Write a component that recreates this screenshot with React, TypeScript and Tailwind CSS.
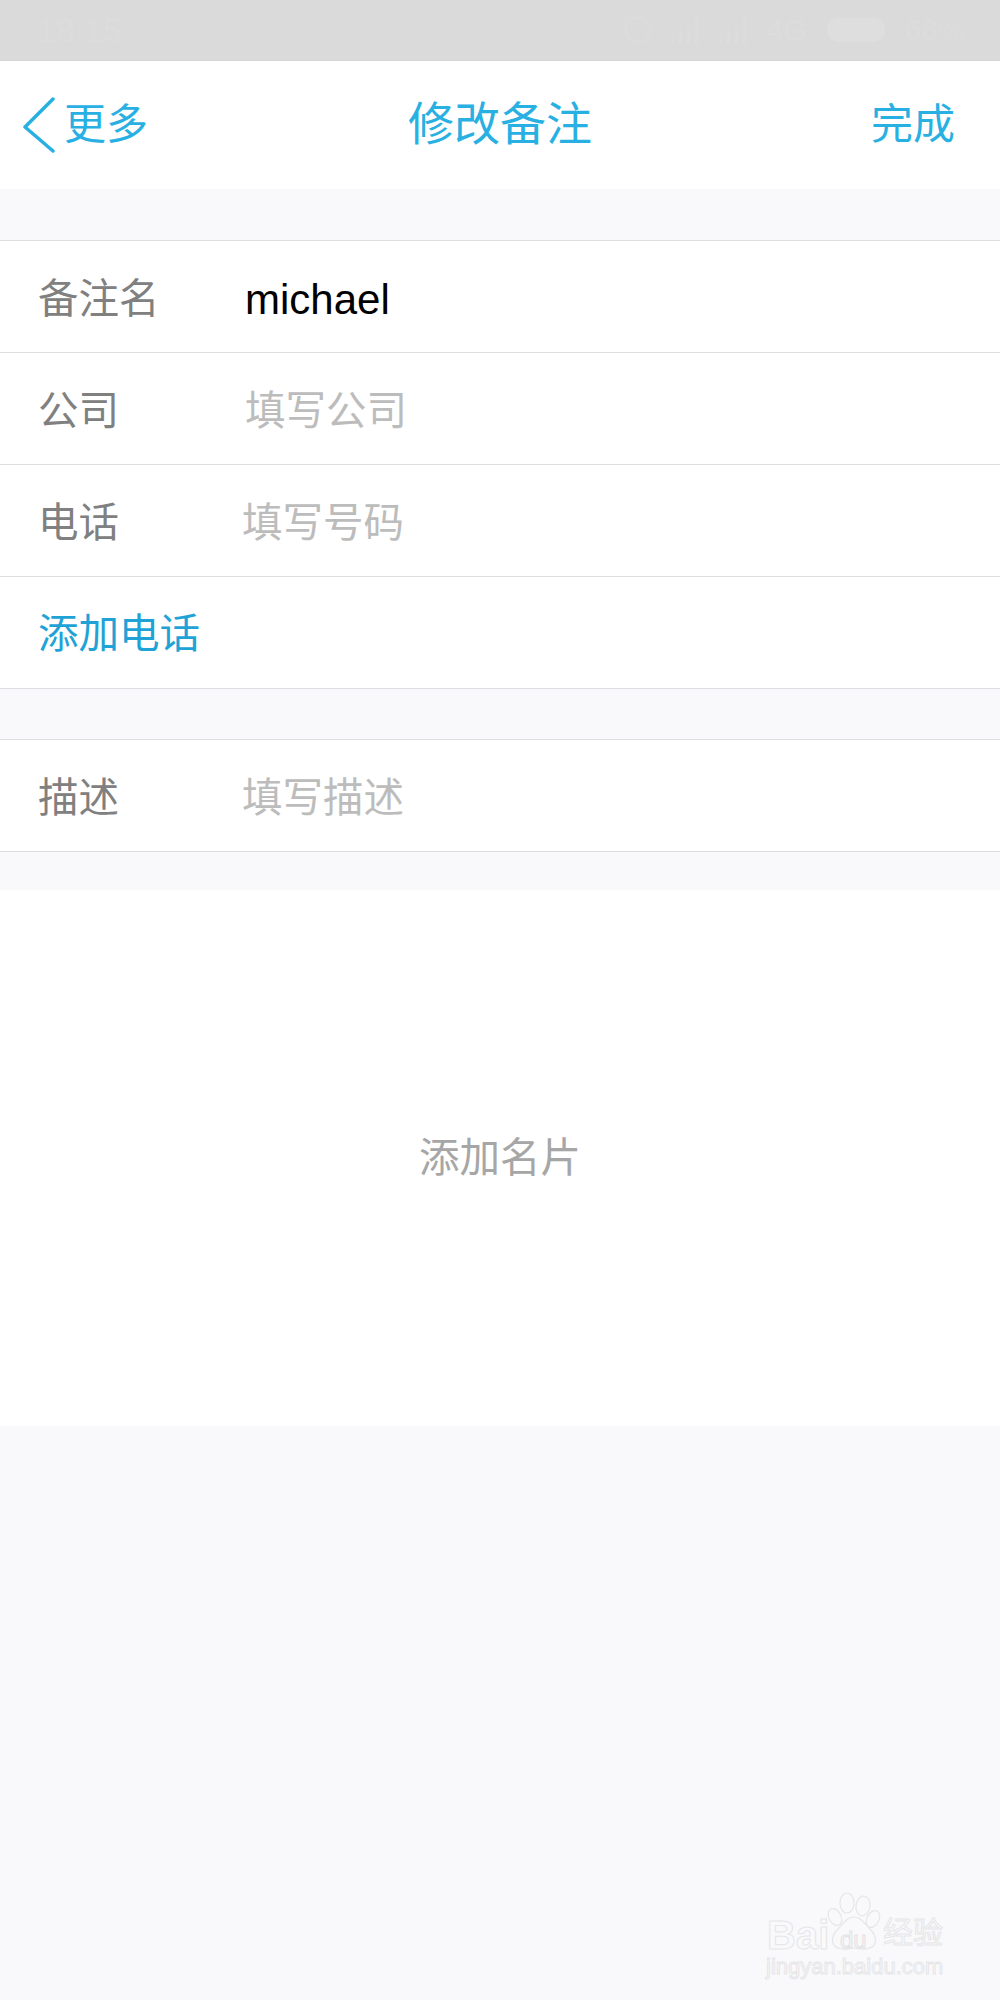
import React from 'react';

const cjk = "font-['Liberation_Sans','Noto_Sans_CJK_SC',sans-serif]";

const Row = ({ label, value, valueClass, top }: { label: string; value: string; valueClass: string; top?: boolean }) => (
  <div className={`flex items-center bg-white border-b border-[#dddde2] pt-[6px] ${top ? 'h-[113px] border-t' : 'h-[112px]'}`}>
    <span className="w-[205px] shrink-0 pl-[38px] text-[40.5px] leading-none text-[#808080]">{label}</span>
    <span className={valueClass}>{value}</span>
  </div>
);

const Signal = () => (
  <svg width="28" height="26" viewBox="0 0 28 26" fill="#dcdcdc">
    <rect x="0" y="20" width="3" height="6" />
    <rect x="8" y="14" width="3" height="12" />
    <rect x="16" y="8" width="3" height="18" />
    <rect x="24" y="0" width="3" height="26" />
  </svg>
);

const Watermark = () => (
  <div className="absolute left-[766px] top-[1890px] w-[190px] h-[100px] text-[#f9f9fb] [-webkit-text-stroke:1px_#e6e6e8]">
    <span className="absolute left-[1px] top-[25px] text-[40px] font-bold leading-none font-['Liberation_Sans',sans-serif]">Bai</span>
    <svg className="absolute left-[60px] top-0 w-[56px] h-[62px]" viewBox="0 0 56 62" fill="#f9f9fb" stroke="#e6e6e8" strokeWidth="1.2">
      <ellipse cx="21" cy="13" rx="7" ry="10" />
      <ellipse cx="37" cy="16" rx="7" ry="10" transform="rotate(8 37 16)" />
      <ellipse cx="9" cy="27" rx="6" ry="9" transform="rotate(-28 9 27)" />
      <ellipse cx="47" cy="29" rx="6" ry="9" transform="rotate(28 47 29)" />
      <path d="M28 27c7 0 10 6 16 12 7 7 9 18-4 20-5 .8-8-1-12-1s-7 1.800-12 1C3 57 5 46 12 39c6-6 9-12 16-12z" />
    </svg>
    <span className="absolute left-[74px] top-[38px] text-[24px] leading-none font-['Liberation_Sans',sans-serif] [-webkit-text-stroke:1px_#e2e2e4]">du</span>
    <span className={`absolute left-[117px] top-[28px] text-[30px] leading-none ${cjk}`}>经验</span>
    <span className="absolute left-0 top-[66px] text-[22px] leading-none whitespace-nowrap font-['Liberation_Sans',sans-serif]">jingyan.baidu.com</span>
  </div>
);

export default function App() {
  return (
    <div className={`relative h-[2000px] w-[1000px] overflow-hidden bg-[#f9f9fb] ${cjk}`}>
      {/* status bar, washed out under the mask */}
      <div className="flex h-[61px] items-center justify-between bg-[#dadada] pl-[37px] pr-[35px] text-[#dcdcdc] border-b border-[#d4d4d4]">
        <span className="text-[34px] leading-none">18:15</span>
        <div className="flex items-center gap-[20px] text-[30px] leading-none">
          <span className="h-[26px] w-[26px] rounded-full border-2 border-[#dcdcdc]" />
          <Signal />
          <Signal />
          <span>4G</span>
          <span className="h-[24px] w-[58px] rounded-full bg-[#dedede]" />
          <span>68%</span>
        </div>
      </div>

      <div className="relative flex h-[128px] items-center justify-between bg-white pl-[22px] pr-[45px] text-[#29b0e3]">
        <div className="flex items-center">
          <svg width="34" height="56" viewBox="0 0 34 56" fill="none" stroke="#29b0e3" strokeWidth="3.500" strokeLinecap="round" strokeLinejoin="round">
            <path d="M31 2 3 30l28 24" />
          </svg>
          <span className="ml-[8px] text-[42px] leading-none">更多</span>
        </div>
        <span className="absolute left-[408px] top-[40px] text-[46px] leading-none">修改备注</span>
        <span className="text-[42px] leading-none">完成</span>
      </div>

      <div className="h-[51px]" />
      <Row top label="备注名" value="michael" valueClass="text-[42px] leading-none text-black ml-[40px]" />
      <Row label="公司" value="填写公司" valueClass="text-[40.5px] leading-none text-[#bcbcbc] ml-[40px]" />
      <Row label="电话" value="填写号码" valueClass="text-[40.5px] leading-none text-[#bcbcbc] ml-[37px]" />
      <div className="flex h-[112px] items-center bg-white border-b border-[#dddde2] pt-[4px] pl-[38px] text-[40.5px] leading-none text-[#1fa3d6]">添加电话</div>

      <div className="h-[50px]" />
      <Row top label="描述" value="填写描述" valueClass="text-[40.5px] leading-none text-[#bcbcbc] ml-[37px]" />

      <div className="h-[38px]" />
      <div className="flex h-[536px] items-center justify-center bg-white text-[40.5px] leading-none text-[#a6a6a6]">添加名片</div>

      <Watermark />
    </div>
  );
}
